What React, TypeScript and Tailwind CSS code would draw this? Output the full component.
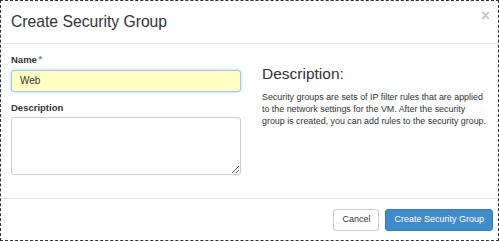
export default function App() {
  return (
    <div className="w-[499px] h-[241px] bg-white border border-dashed border-[#333] flex flex-col font-['Liberation_Sans',Arial,sans-serif] text-[#333]">
      <div className="h-[43px] shrink-0 flex items-center justify-between pl-[10px] pr-[8px] border-b border-[#e5e5e5]">
        <h4 className="text-[15.7px] leading-none">Create Security Group</h4>
        <span className="text-[16px] font-bold leading-none text-[#c8c8c8] -mt-[12px]">×</span>
      </div>
      <div className="flex-1 flex px-[10px] pt-[10px] border-b border-[#e5e5e5]">
        <div className="w-[230px] shrink-0 flex flex-col">
          <label className="text-[9.5px] font-bold leading-none mt-[1px]">
            Name <span className="text-[#428bca] align-top text-[9px] -ml-[1px]">*</span>
          </label>
          <input
            defaultValue="Web"
            className="mt-[5px] h-[22px] w-[230px] rounded-[3px] border border-[#9ecaed] bg-[#ffffc4] px-[8px] text-[10px] text-[#333] shadow-[0_0_3px_#9ecaed] outline-none"
          />
          <label className="text-[9.5px] font-bold leading-none mt-[11px]">Description</label>
          <textarea className="mt-[5px] h-[58px] w-[230px] rounded-[3px] border border-[#ccc] bg-white px-[8px] text-[10px] outline-none" />
        </div>
        <div className="flex-1 pl-[21px] pt-[12px]">
          <h3 className="text-[15.5px] leading-none">Description:</h3>
          <p className="mt-[9px] text-[8.9px] leading-[12px] text-[#333] whitespace-nowrap">
            Security groups are sets of IP filter rules that are applied
            <br />
            to the network settings for the VM. After the security
            <br />
            group is created, you can add rules to the security group.
          </p>
        </div>
      </div>
      <div className="h-[41px] shrink-0 flex items-center justify-end gap-[6px] pr-[5px]">
        <button className="h-[22px] px-[8px] rounded-[3px] border border-[#ccc] bg-white text-[9px] text-[#333]">
          Cancel
        </button>
        <button className="h-[22px] px-[8px] rounded-[3px] border border-[#357ebd] bg-[#428bca] text-[9px] text-white">
          Create Security Group
        </button>
      </div>
    </div>
  );
}
